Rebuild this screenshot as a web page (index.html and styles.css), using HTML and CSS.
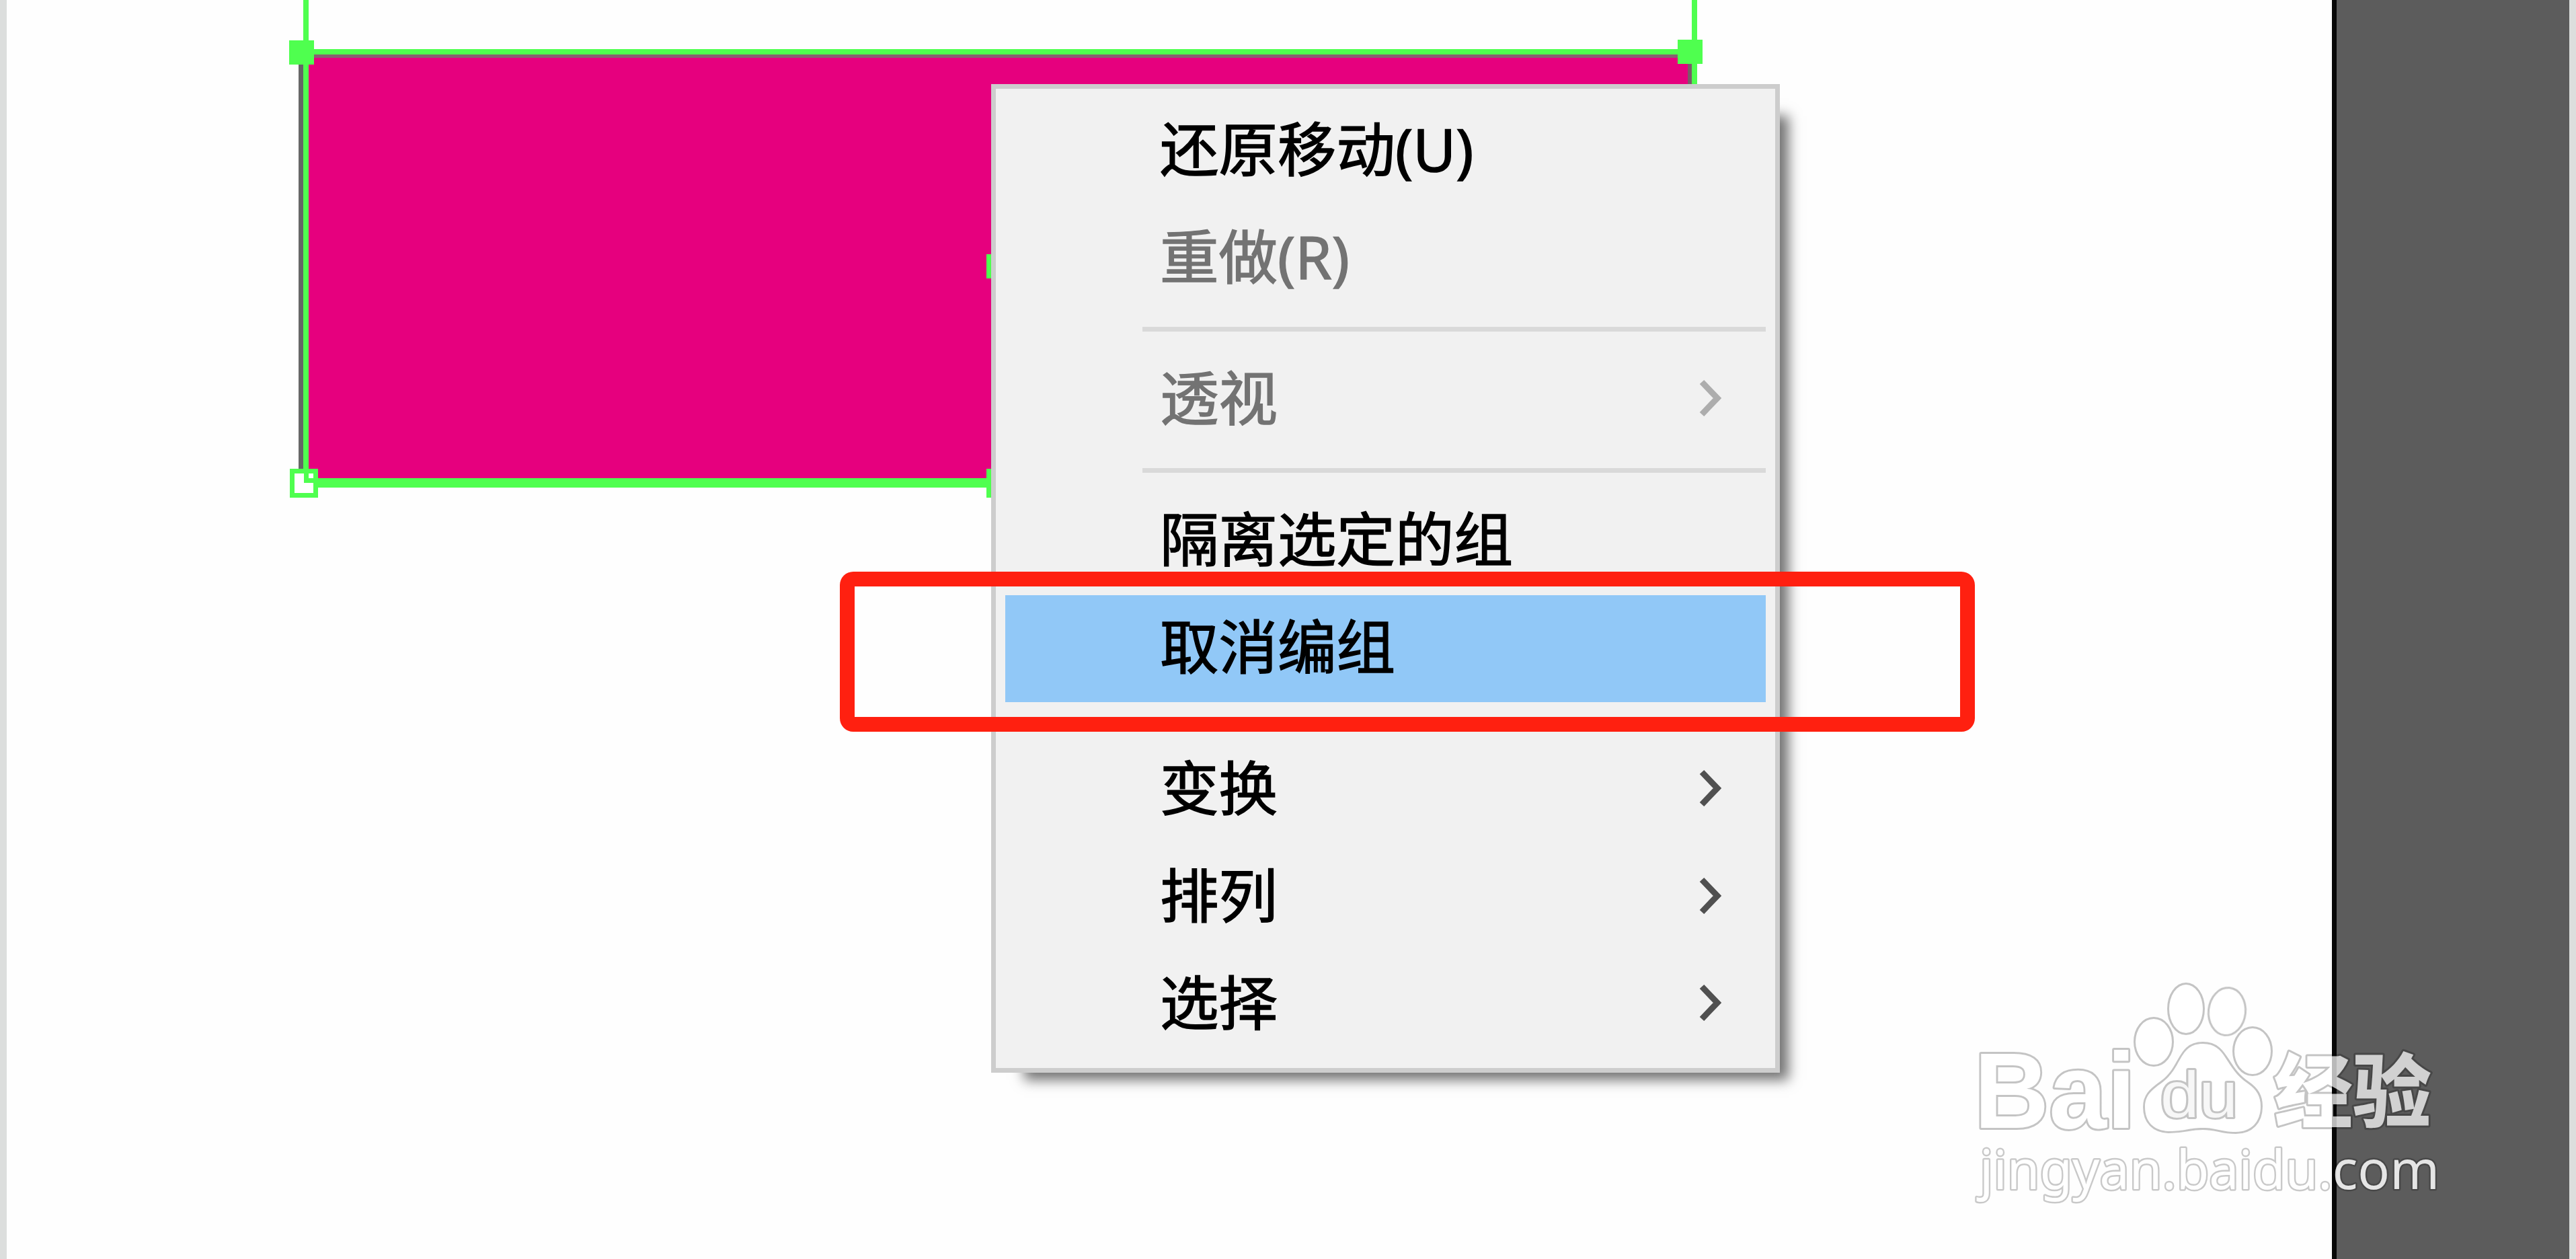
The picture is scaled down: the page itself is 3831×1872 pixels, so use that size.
FILE: index.html
```html
<!DOCTYPE html>
<html lang="zh-CN">
<head>
  <meta charset="UTF-8">
  <title>取消编组</title>
  <link rel="stylesheet" href="styles.css">
</head>
<body>

  <div class="workspace">
    <div class="edge"></div>
    <div class="artboard"></div>
    <div class="pasteboard"></div>
    <div class="edge"></div>

    <!-- selected rectangle -->
    <svg class="selection" width="2600" height="760">
      <rect x="456" y="84" width="2057" height="632" fill="#e6007e"/>
      <rect x="444" y="94" width="8" height="604" fill="#666"/>
      <rect x="459" y="80" width="2053" height="6" fill="#8a6070"/>
      <rect x="2510" y="84" width="7" height="100" fill="#7a5a68"/>
      <g fill="#4fff4f">
        <rect x="451" y="0" width="8" height="700"/>
        <rect x="2516" y="0" width="8" height="200"/>
        <rect x="459" y="73" width="2057" height="8"/>
        <rect x="459" y="711" width="1020" height="14"/>
        <rect x="430" y="60" width="37" height="36"/>
        <rect x="2495" y="59" width="37" height="36"/>
        <rect x="1467" y="378" width="37" height="36"/>
        <rect x="1467" y="697" width="37" height="43"/>
        <rect x="431" y="697" width="42" height="43"/>
      </g>
      <path d="M438 704H452V718H466V733H438Z" fill="#fff"/>
      <rect x="459" y="704" width="7" height="7" fill="#fff"/>
    </svg>

    <ul class="menu">
      <li class="item">还原移动(U)</li>
      <li class="item disabled">重做(R)</li>
      <li class="line"></li>
      <li class="item disabled">透视
        <svg class="arrow" width="36" height="56"><path d="M5 5L28 29L5 53"/></svg>
      </li>
      <li class="line"></li>
      <li class="item">隔离选定的组</li>
      <li class="item active">取消编组</li>
      <li class="line"></li>
      <li class="item">变换
        <svg class="arrow" width="36" height="56"><path d="M5 5L28 29L5 53"/></svg>
      </li>
      <li class="item">排列
        <svg class="arrow" width="36" height="56"><path d="M5 5L28 29L5 53"/></svg>
      </li>
      <li class="item">选择
        <svg class="arrow" width="36" height="56"><path d="M5 5L28 29L5 53"/></svg>
      </li>
    </ul>

    <div class="mark"></div>

    <svg class="watermark" width="740" height="360" viewBox="2920 1440 740 360">
      <g class="logo">
        <text class="bai" x="2936" y="1677" textLength="240" lengthAdjust="spacingAndGlyphs">Bai</text>
        <ellipse cx="3203" cy="1549" rx="27" ry="34"/>
        <ellipse cx="3251" cy="1500" rx="25" ry="36"/>
        <ellipse cx="3312" cy="1504" rx="26" ry="34" transform="rotate(6 3312 1504)"/>
        <ellipse cx="3350" cy="1563" rx="27" ry="34"/>
        <path d="M3276 1552C3240 1552 3246 1588 3215 1610C3198 1622 3190 1630 3190 1646C3190 1668 3203 1681 3225 1682C3250 1682 3255 1677 3276 1677C3297 1677 3302 1683 3325 1683C3348 1683 3362 1668 3362 1645C3362 1630 3356 1620 3343 1611C3308 1588 3312 1552 3276 1552Z"/>
        <text class="du" x="3213" y="1661" textLength="115" lengthAdjust="spacingAndGlyphs">du</text>
        <text class="jy" x="3382" y="1667" textLength="234" lengthAdjust="spacingAndGlyphs">经验</text>
      </g>
      <text class="url" x="2944" y="1768" textLength="684" lengthAdjust="spacingAndGlyphs">jingyan.baidu.com</text>
    </svg>
  </div>

</body>
</html>
```
FILE: styles.css
```css
body {
  margin: 0;
  overflow: hidden;
  font-family: "Noto Sans", "Noto Sans CJK SC", sans-serif;
}
.workspace {
  position: relative;
  display: flex;
  width: 3831px;
  height: 1872px;
  background: #fefefe;
}
.edge {
  width: 10px;
  background: #dcdedd;
}
.artboard {
  flex: 1;
}
.pasteboard {
  width: 346px;
  border-left: 7px solid #080808;
  background: #5c5c5c;
}
.selection {
  position: absolute;
  left: 0;
  top: 0;
}
.menu {
  position: absolute;
  left: 1474px;
  top: 125px;
  width: 1173px;
  height: 1470px;
  box-sizing: border-box;
  margin: 0;
  padding: 13px 14px;
  border: 7px solid #cdcdcd;
  background: #f1f1f1;
  box-shadow: 31px 29px 18px -18px rgba(0, 0, 0, 0.55);
  list-style: none;
}
.item {
  display: flex;
  align-items: center;
  justify-content: space-between;
  height: 159.4px;
  box-sizing: border-box;
  padding: 0 64px 7px 230px;
  font-size: 87.5px;
  line-height: 120px;
  color: #000;
  -webkit-text-stroke: 1.5px;
}
.disabled {
  color: #737373;
}
.active {
  background: #91c8f7;
}
.line {
  height: 7px;
  margin: 22px 0 22px 204px;
  background: #d9d9d9;
}
.arrow path {
  fill: none;
  stroke: #505050;
  stroke-width: 9;
}
.disabled .arrow path {
  stroke: #adadad;
}
.mark {
  position: absolute;
  left: 1249px;
  top: 850px;
  width: 1688px;
  height: 238px;
  box-sizing: border-box;
  border: 22px solid #ff2010;
  border-radius: 20px;
}
.watermark {
  position: absolute;
  left: 2920px;
  top: 1440px;
}
.logo {
  opacity: 0.72;
  fill: #fff;
  stroke: rgba(0, 0, 0, 0.32);
  stroke-width: 6;
  stroke-linejoin: round;
  paint-order: stroke;
}
.bai {
  font: bold 159px "Liberation Sans", sans-serif;
}
.du {
  font: 96px "Liberation Sans", sans-serif;
  fill: #f4f4f4;
}
.jy {
  font: 900 119px "Noto Sans CJK SC", sans-serif;
}
.url {
  font: 80px "Noto Sans", sans-serif;
  fill: #fff;
  stroke: rgba(0, 0, 0, 0.25);
  stroke-width: 5;
  stroke-linejoin: round;
  paint-order: stroke;
  opacity: 0.84;
}
```
